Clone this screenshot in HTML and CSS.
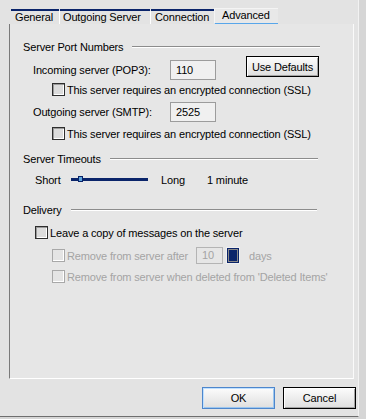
FILE: index.html
```html
<!DOCTYPE html>
<html>
<head>
<meta charset="utf-8">
<link rel="stylesheet" href="styles.css">
</head>
<body>
<div class="dialog">
  <div class="tabs">
    <div class="tab t-general">General</div>
    <div class="sep"></div>
    <div class="tab t-out">Outgoing Server</div>
    <div class="sep"></div>
    <div class="tab t-conn">Connection</div>
    <div class="tab active">Advanced</div>
  </div>
  <div class="panel">
    <div class="section"><span>Server Port Numbers</span><div class="rule"></div></div>
    <div class="port-row first">
      <span class="port-label">Incoming server (POP3):</span>
      <div class="field">110</div>
      <button class="btn defaults">Use Defaults</button>
    </div>
    <div class="check-row sub r1"><span class="box"></span><span>This server requires an encrypted connection (SSL)</span></div>
    <div class="port-row second">
      <span class="port-label">Outgoing server (SMTP):</span>
      <div class="field">2525</div>
    </div>
    <div class="check-row sub r2"><span class="box"></span><span>This server requires an encrypted connection (SSL)</span></div>

    <div class="section s2"><span>Server Timeouts</span><div class="rule"></div></div>
    <div class="slider-row">
      <span class="short">Short</span>
      <div class="track"><span class="thumb"></span></div>
      <span class="long">Long</span>
      <span>1 minute</span>
    </div>

    <div class="section s3"><span>Delivery</span><div class="rule"></div></div>
    <div class="check-row main r3"><span class="box"></span><span>Leave a copy of messages on the server</span></div>
    <div class="check-row sub disabled r4">
      <span class="box"></span><span class="after">Remove from server after</span>
      <div class="field small">10</div><div class="spin"></div><span class="days">days</span>
    </div>
    <div class="check-row sub disabled r5"><span class="box"></span><span>Remove from server when deleted from 'Deleted Items'</span></div>
  </div>
  <div class="footer">
    <button class="btn ok">OK</button>
    <button class="btn">Cancel</button>
  </div>
</div>
</body>
</html>
```

FILE: styles.css
```css
* { box-sizing: border-box; }
html, body { margin: 0; }
body {
  width: 366px;
  height: 419px;
  background: #d6d6d6;
  font: 11px "Liberation Sans", Arial, sans-serif;
  letter-spacing: -0.15px;
  color: #000;
  overflow: hidden;
}
.dialog {
  width: 359px;
  height: 417px;
  background: #e3e3e3;
  border-right: 1px solid #f2f2f2;
  border-bottom: 1px solid #6e6e6e;
  display: flex;
  flex-direction: column;
}
.tabs {
  display: flex;
  height: 24px;
  padding-left: 11px;
  padding-top: 9px;
}
.tab {
  height: 15px;
  border-top: 2px solid #0a246a;
  line-height: 12px;
  padding-left: 4px;
  white-space: nowrap;
}
.t-general { width: 48px; }
.t-out { width: 90px; padding-left: 3px; }
.t-conn { width: 63px; padding-left: 4px; }
.sep {
  width: 1px;
  height: 13px;
  margin-top: 2px;
  background: #ffffff;
}
.tab.active {
  width: 64px;
  height: 17px;
  margin-top: -1px;
  border-top: 1px solid #f4f4f4;
  border-left: 1px solid #f4f4f4;
  background: #e8e8e8;
  border-bottom: 2px solid #58a6ea;
  padding-left: 7px;
  line-height: 12px;
}
.panel {
  margin-left: 9px;
  width: 345px;
  height: 355px;
  background: #e6e6e6;
  border-left: 1px solid #7a7a7a;
  border-right: 1px solid #fafafa;
  border-bottom: 1px solid #ffffff;
  padding: 16px 33px 0 13px;
  display: flex;
  flex-direction: column;
}
.section {
  display: flex;
  align-items: center;
  gap: 9px;
  height: 14px;
  line-height: 14px;
}
.rule {
  flex: 1;
  height: 2px;
  border-top: 1px solid #8c8c8c;
  border-bottom: 1px solid #ffffff;
}
.s2 { margin-top: 12px; }
.s3 { margin-top: 16px; }
.s3 .rule { margin-right: 3px; }
.s2 .rule { margin-right: 2px; }

.port-row {
  display: flex;
  padding-left: 10px;
}
.port-row.first { height: 24px; margin-top: 2px; }
.port-row.second { height: 20px; margin-top: 6px; }
.port-label {
  width: 137px;
  align-self: flex-end;
  line-height: 20px;
}
.field {
  width: 46px;
  height: 20px;
  align-self: flex-end;
  border: 1px solid #9c9c9c;
  background: #f0f0f0;
  padding-left: 5px;
  line-height: 18px;
}
.btn {
  width: 73px;
  height: 22px;
  border: 1px solid #000;
  background: linear-gradient(#fcfcfc, #dedede);
  box-shadow: inset 1px 1px #ffffff, inset -1px -1px #a4a4a4;
  font: 11px "Liberation Sans", Arial, sans-serif;
  letter-spacing: -0.15px;
  color: #000;
  padding: 0;
}
.btn.defaults {
  height: 21px;
  margin-left: 30px;
  align-self: flex-start;
}
.btn.ok {
  border-color: #4d86cc;
  box-shadow: inset 1px 1px #bfe0ff, inset -1px -1px #9cc6ee;
}

.check-row {
  display: flex;
  align-items: center;
  height: 13px;
  gap: 2px;
  white-space: nowrap;
}
.check-row.sub { padding-left: 29px; }
.check-row.main { padding-left: 12px; }
.box {
  width: 13px;
  height: 13px;
  flex: none;
  border: 1px solid #2e2e2e;
  background: #dcdcdc;
  box-shadow: inset 1px 1px #9a9a9a, inset -1px -1px #ffffff;
}
.r1 { margin-top: 3px; }
.r2 { margin-top: 5px; }
.r3 { margin-top: 9px; }
.r4 { margin-top: 8px; height: 17px; }
.r5 { margin-top: 6px; }
.disabled { color: #a4a4a4; }
.disabled .box {
  border: 1px solid #a8a8a8;
  background: #e4e4e4;
  box-shadow: inset -1px -1px #ffffff;
}
.after { width: 127px; }
.field.small {
  width: 27px;
  height: 17px;
  border-color: #b4b4b4;
  background: #e6e6e6;
  line-height: 15px;
  color: #a4a4a4;
}
.spin {
  width: 14px;
  height: 17px;
  margin-left: 1px;
  background: #0a246a;
  border: 1px solid #f0f0f0;
  outline: 1px solid #8a8a8a;
  outline-offset: -3px;
  align-self: flex-end;
}
.days { margin-left: 7px; }

.slider-row {
  display: flex;
  align-items: center;
  height: 14px;
  margin-top: 7px;
  padding-left: 12px;
}
.short { width: 36px; }
.track {
  position: relative;
  width: 77px;
  height: 3px;
  background: #0a246a;
  margin-top: -2px;
}
.thumb {
  position: absolute;
  left: 7px;
  top: -2px;
  width: 5px;
  height: 6px;
  background: #5ea5dc;
  border: 1px solid #0a246a;
}
.long { width: 46px; margin-left: 13px; }

.footer {
  display: flex;
  justify-content: flex-end;
  gap: 8px;
  padding-right: 2px;
  margin-top: 8px;
}
```
